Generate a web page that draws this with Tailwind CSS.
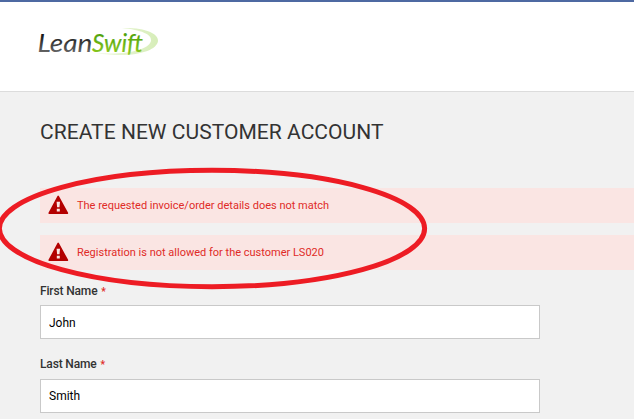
<!DOCTYPE html>
<html lang="en">
<head>
<meta charset="utf-8">
<title>Create New Customer Account</title>
<script src="https://cdn.jsdelivr.net/npm/@tailwindcss/browser@4"></script>
</head>
<body class="relative h-[419px] w-[634px] overflow-hidden bg-[#f1f1f1] font-['Roboto',sans-serif] text-[#333]">
<header class="h-[92px] border-t-2 border-b border-t-[#4e69a2] border-b-[#dcdcdc] bg-white pt-[22px] pl-[34px]">
<svg class="block" width="130" height="38" viewBox="34 24 130 38" role="img" aria-label="LeanSwift">
<defs>
<linearGradient id="dark" x1="0" y1="0" x2="0" y2="1"><stop offset=".25" stop-color="#111"/><stop offset=".85" stop-color="#666"/></linearGradient>
<linearGradient id="green" x1="0" y1="0" x2="0" y2="1"><stop offset=".2" stop-color="#489c08"/><stop offset=".85" stop-color="#88c71c"/></linearGradient>
<linearGradient id="swoosh" x1="0" y1="0" x2="1" y2="0"><stop offset="0" stop-color="#d9efb5" stop-opacity=".4"/><stop offset="1" stop-color="#d6edb8"/></linearGradient>
</defs>
<path d="M122 28C143 27 159 33 158 41C157 51 133 59 96 53C124 55 148 51 151 41C152 34 141 30 122 28Z" fill="url(#swoosh)"/>
<g font-family="Lato, sans-serif" font-size="26" font-style="italic">
<text x="37.500" y="51.500" textLength="55" lengthAdjust="spacingAndGlyphs" fill="url(#dark)">Lean</text>
<text x="92" y="51.500" textLength="51" lengthAdjust="spacingAndGlyphs" fill="url(#green)" stroke="url(#green)" stroke-width=".2">Swift</text>
</g>
</svg>
</header>
<main class="pl-10">
<h1 class="pt-[26px] text-[21px] leading-7 tracking-[0.04px] whitespace-nowrap">CREATE NEW CUSTOMER ACCOUNT</h1>
<div class="mt-[42px] flex flex-col gap-3 text-[11px] text-[#e02b27]">
<div class="flex h-[35px] items-center bg-[#fae5e3] pl-2">
<svg class="mb-px block" width="21" height="20" viewBox="0 0 21 20"><path d="M10.2 1.4L19.4 18.2H1.2Z" fill="#b30000" stroke="#b30000" stroke-width="1.6" stroke-linejoin="round"/><path d="M8.6 6.8H12L11.5 12.3H9.1ZM8.8 13.7H11.8V16.4H8.8Z" fill="#fae5e3"/></svg>
<span class="ml-2 pt-0.5">The requested invoice/order details does not match</span>
</div>
<div class="flex h-[35px] items-center bg-[#fae5e3] pl-2">
<svg class="mb-px block" width="21" height="20" viewBox="0 0 21 20"><path d="M10.2 1.4L19.4 18.2H1.2Z" fill="#b30000" stroke="#b30000" stroke-width="1.6" stroke-linejoin="round"/><path d="M8.6 6.8H12L11.5 12.3H9.1ZM8.8 13.7H11.8V16.4H8.8Z" fill="#fae5e3"/></svg>
<span class="ml-2 pt-0.5">Registration is not allowed for the customer LS020</span>
</div>
</div>
<form class="mt-[13px] w-[500px] text-xs">
<label class="block h-[22px] leading-4 font-medium tracking-[-0.15px]" for="first">First Name <span class="ml-px text-[10px] font-bold text-[#e02b27]">*</span></label>
<input id="first" class="block h-[34px] w-full border border-[#c9c9c9] bg-white px-2 pt-0.5 text-black" value="John">
<label class="mt-[17px] block h-[23px] leading-4 font-medium tracking-[-0.15px]" for="last">Last Name <span class="ml-px text-[10px] font-bold text-[#e02b27]">*</span></label>
<input id="last" class="block h-[34px] w-full border border-[#c9c9c9] bg-white px-2 text-black" value="Smith">
</form>
</main>
<svg class="pointer-events-none absolute top-0 left-0" width="634" height="419"><ellipse cx="212" cy="228.5" rx="212.6" ry="58.2" fill="none" stroke="#ed1c24" stroke-width="5"/></svg>
</body>
</html>
